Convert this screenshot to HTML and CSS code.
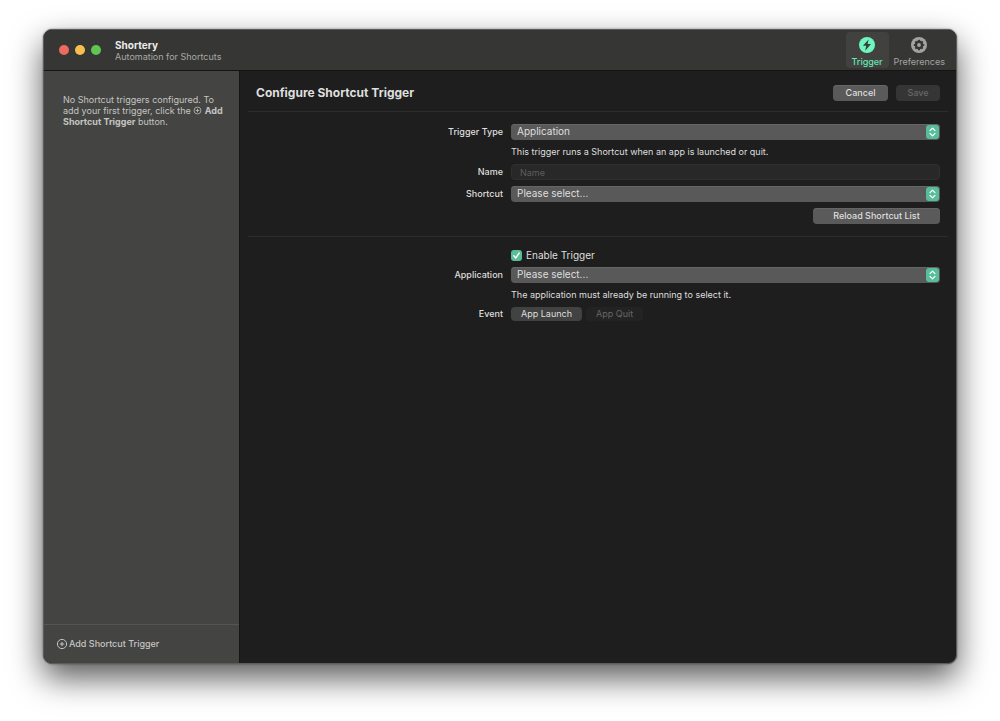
FILE: index.html
```html
<!DOCTYPE html>
<html lang="en">
<head>
<meta charset="utf-8">
<title>Shortery</title>
<link rel="stylesheet" href="styles.css">
</head>
<body>
<svg class="symbols" aria-hidden="true">
  <symbol id="plus-circle" viewBox="0 0 12 12">
    <circle cx="6" cy="6" r="4.6" fill="none" stroke="currentColor" stroke-width="1"/>
    <path d="M6 4.2v3.6M4.2 6h3.6" fill="none" stroke="currentColor" stroke-width="1.1" stroke-linecap="round"/>
  </symbol>
  <symbol id="updown" viewBox="0 0 12 13">
    <path d="M3.7 5.2 6 2.9l2.3 2.3M3.7 7.8 6 10.1l2.3-2.3" fill="none" stroke="#fff" stroke-width="1.2" stroke-linecap="round" stroke-linejoin="round"/>
  </symbol>
</svg>
<div class="window">
  <header class="toolbar">
    <div class="lights">
      <button class="light light-close" aria-label="Close"></button>
      <button class="light light-minimize" aria-label="Minimize"></button>
      <button class="light light-zoom" aria-label="Zoom"></button>
    </div>
    <div class="titles">
      <div class="title">Shortery</div>
      <div class="subtitle">Automation for Shortcuts</div>
    </div>
    <nav class="tabs">
      <button class="tab tab-active">
        <svg class="tab-icon" viewBox="0 0 16 16" aria-hidden="true"><circle cx="8" cy="8" r="8" fill="currentColor"/><path d="M9.6 2.4 3.9 8.8h3.3l-1 4.9 5.8-6.6H8.6z" fill="#3c3c3a"/></svg>
        <span>Trigger</span>
      </button>
      <button class="tab">
        <svg class="tab-icon" viewBox="0 0 16 16" aria-hidden="true"><circle cx="8" cy="8" r="8" fill="currentColor"/><g fill="#363634"><circle cx="8" cy="8" r="4.2"/><rect x="6.9" y="2.8" width="2.2" height="10.4" rx=".5"/><rect x="6.9" y="2.8" width="2.2" height="10.4" rx=".5" transform="rotate(45 8 8)"/><rect x="6.9" y="2.8" width="2.2" height="10.4" rx=".5" transform="rotate(90 8 8)"/><rect x="6.9" y="2.8" width="2.2" height="10.4" rx=".5" transform="rotate(135 8 8)"/></g><circle cx="8" cy="8" r="1.9" fill="currentColor"/></svg>
        <span>Preferences</span>
      </button>
    </nav>
  </header>
  <div class="content">
    <aside class="sidebar">
      <p class="empty">No Shortcut triggers configured. To add your first trigger, click the <svg class="inline-icon" aria-hidden="true"><use href="#plus-circle"/></svg> <b>Add Shortcut Trigger</b> button.</p>
      <div class="sidebar-footer">
        <button class="add"><svg class="add-icon" aria-hidden="true"><use href="#plus-circle"/></svg>Add Shortcut Trigger</button>
      </div>
    </aside>
    <main class="main">
      <div class="main-header">
        <h1 class="heading">Configure Shortcut Trigger</h1>
        <button class="button button-cancel">Cancel</button>
        <button class="button button-save" disabled>Save</button>
      </div>
      <form class="form">
        <label class="label" for="type">Trigger Type</label>
        <div class="picker">
          <select class="select" id="type"><option>Application</option></select>
          <svg class="picker-badge" aria-hidden="true"><use href="#updown"/></svg>
        </div>
        <p class="note">This trigger runs a Shortcut when an app is launched or quit.</p>
        <label class="label" for="name">Name</label>
        <input class="input" id="name" type="text" placeholder="Name">
        <label class="label" for="shortcut">Shortcut</label>
        <div class="picker">
          <select class="select" id="shortcut"><option>Please select...</option></select>
          <svg class="picker-badge" aria-hidden="true"><use href="#updown"/></svg>
        </div>
        <button class="button button-reload" type="button">Reload Shortcut List</button>
      </form>
      <form class="form">
        <label class="check"><input class="checkbox" type="checkbox" checked><svg class="tick" viewBox="0 0 11 11" aria-hidden="true"><path d="M2.8 5.8 4.7 8 8.2 3" fill="none" stroke="#fff" stroke-width="1.4" stroke-linecap="round" stroke-linejoin="round"/></svg>Enable Trigger</label>
        <label class="label" for="app">Application</label>
        <div class="picker">
          <select class="select" id="app"><option>Please select...</option></select>
          <svg class="picker-badge" aria-hidden="true"><use href="#updown"/></svg>
        </div>
        <p class="note">The application must already be running to select it.</p>
        <span class="label" id="event">Event</span>
        <div class="events" role="group" aria-labelledby="event">
          <button class="event event-on" type="button">App Launch</button>
          <button class="event" type="button">App Quit</button>
        </div>
      </form>
    </main>
  </div>
</div>
</body>
</html>
```

FILE: styles.css
```css
* { box-sizing: border-box; }

body {
  margin: 0;
  min-height: 100vh;
  padding: 29px 43px 57px;
  display: flex;
  background: #fff;
  color: #dfdfdf;
  font: 10px/12px Inter, "Liberation Sans", sans-serif;
}

button, input, select { font: inherit; color: inherit; border: 0; margin: 0; padding: 0; }
p, h1 { margin: 0; }
.symbols { position: absolute; width: 0; height: 0; }

.window {
  flex: 1;
  display: flex;
  flex-direction: column;
  border: 1px solid #5c5c5b;
  border-radius: 9px;
  overflow: hidden;
  background: #1e1e1e;
  box-shadow: 0 14px 32px rgba(0, 0, 0, .65), 0 0 2px rgba(0, 0, 0, .5);
}

.toolbar {
  display: flex;
  align-items: center;
  height: 41px;
  padding: 0 8px 0 15px;
  background: #363634;
  border-bottom: 1px solid #141414;
}
.lights { display: flex; gap: 6px; }
.light { width: 10px; height: 10px; border-radius: 50%; }
.light-close { background: #ed6a5f; }
.light-minimize { background: #f5bf4f; }
.light-zoom { background: #61c554; }
.titles { margin-left: 14px; flex: 1; }
.title { font-size: 10px; line-height: 12px; font-weight: 700; color: #ececec; }
.subtitle { font-size: 9px; line-height: 11px; color: #a9a9a8; }
.tabs { display: flex; gap: 2px; }
.tab {
  min-width: 43px;
  height: 36px;
  padding: 5px 3px 0;
  display: flex;
  flex-direction: column;
  align-items: center;
  gap: 3px;
  border-radius: 4px;
  background: none;
  color: #a3a3a2;
  font-size: 9px;
  line-height: 11px;
}
.tab-active { background: #41413f; color: #63e6b3; font-weight: 500; }
.tab-icon { width: 16px; height: 16px; }
.tab-active .tab-icon { color: #6ff5c0; }

.content { flex: 1; display: flex; }
.sidebar {
  width: 196px;
  display: flex;
  flex-direction: column;
  background: #444442;
  border-right: 1px solid #161616;
  color: #c4c4c3;
}
.empty { flex: 1; padding: 23px 16px 0 19px; font-size: 9px; line-height: 11px; }
.inline-icon { width: 9px; height: 9px; vertical-align: -1px; }
.sidebar-footer { padding: 13px 12px; border-top: 1px solid #555553; }
.add { display: flex; align-items: center; gap: 1px; background: none; font-size: 9px; font-weight: 500; }
.add-icon { width: 12px; height: 12px; }

.main { flex: 1; padding: 0 8px; }
.main-header {
  display: flex;
  align-items: center;
  gap: 8px;
  height: 40px;
  padding: 4px 8px 0;
}
.heading { flex: 1; font-size: 12px; line-height: 16px; font-weight: 700; }

.button { height: 16px; border-radius: 4px; background: #5a5a5a; box-shadow: inset 0 1px #666; font-size: 9px; font-weight: 500; line-height: 16px; }
.button-cancel { width: 55px; }
.button-save { width: 44px; background: #353535; box-shadow: none; color: #686868; }

.form {
  display: grid;
  grid-template-columns: 247px 1fr;
  gap: 6px 8px;
  align-items: center;
  padding: 12px 8px;
  border-top: 1px solid #2d2d2d;
}
.label { text-align: right; font-size: 9px; font-weight: 500; }
.picker { position: relative; }
.select {
  appearance: none;
  display: block;
  width: 100%;
  height: 16px;
  padding: 0 20px 2px 6px;
  border-radius: 4px;
  background: #595959;
  box-shadow: inset 0 1px #666;
  line-height: 14px;
}
.picker-badge {
  position: absolute;
  right: 1px;
  top: 1px;
  width: 13px;
  height: 14px;
  border-radius: 3px;
  background: #58bd99;
  pointer-events: none;
}
.note { grid-column: 2; font-size: 9px; }
.input {
  height: 16px;
  padding: 0 8px;
  border-radius: 4px;
  border: 1px solid #303030;
  background: #282828;
  font-size: 9px;
}
.input::placeholder { color: #5d5d5d; }
.button-reload { grid-column: 2; justify-self: end; width: 127px; }

.check { grid-column: 2; justify-self: start; position: relative; display: flex; align-items: center; gap: 4px; }
.checkbox { appearance: none; width: 11px; height: 11px; border-radius: 3px; }
.checkbox:checked { background: #58bd99; }
.tick { position: absolute; left: 0; width: 11px; height: 11px; pointer-events: none; }

.events { display: flex; gap: 4px; }
.event { height: 14px; padding: 0 10px; border-radius: 4px; background: #232323; color: #666; font-size: 9px; }
.event-on { background: #424242; color: #dfdfdf; }
```
